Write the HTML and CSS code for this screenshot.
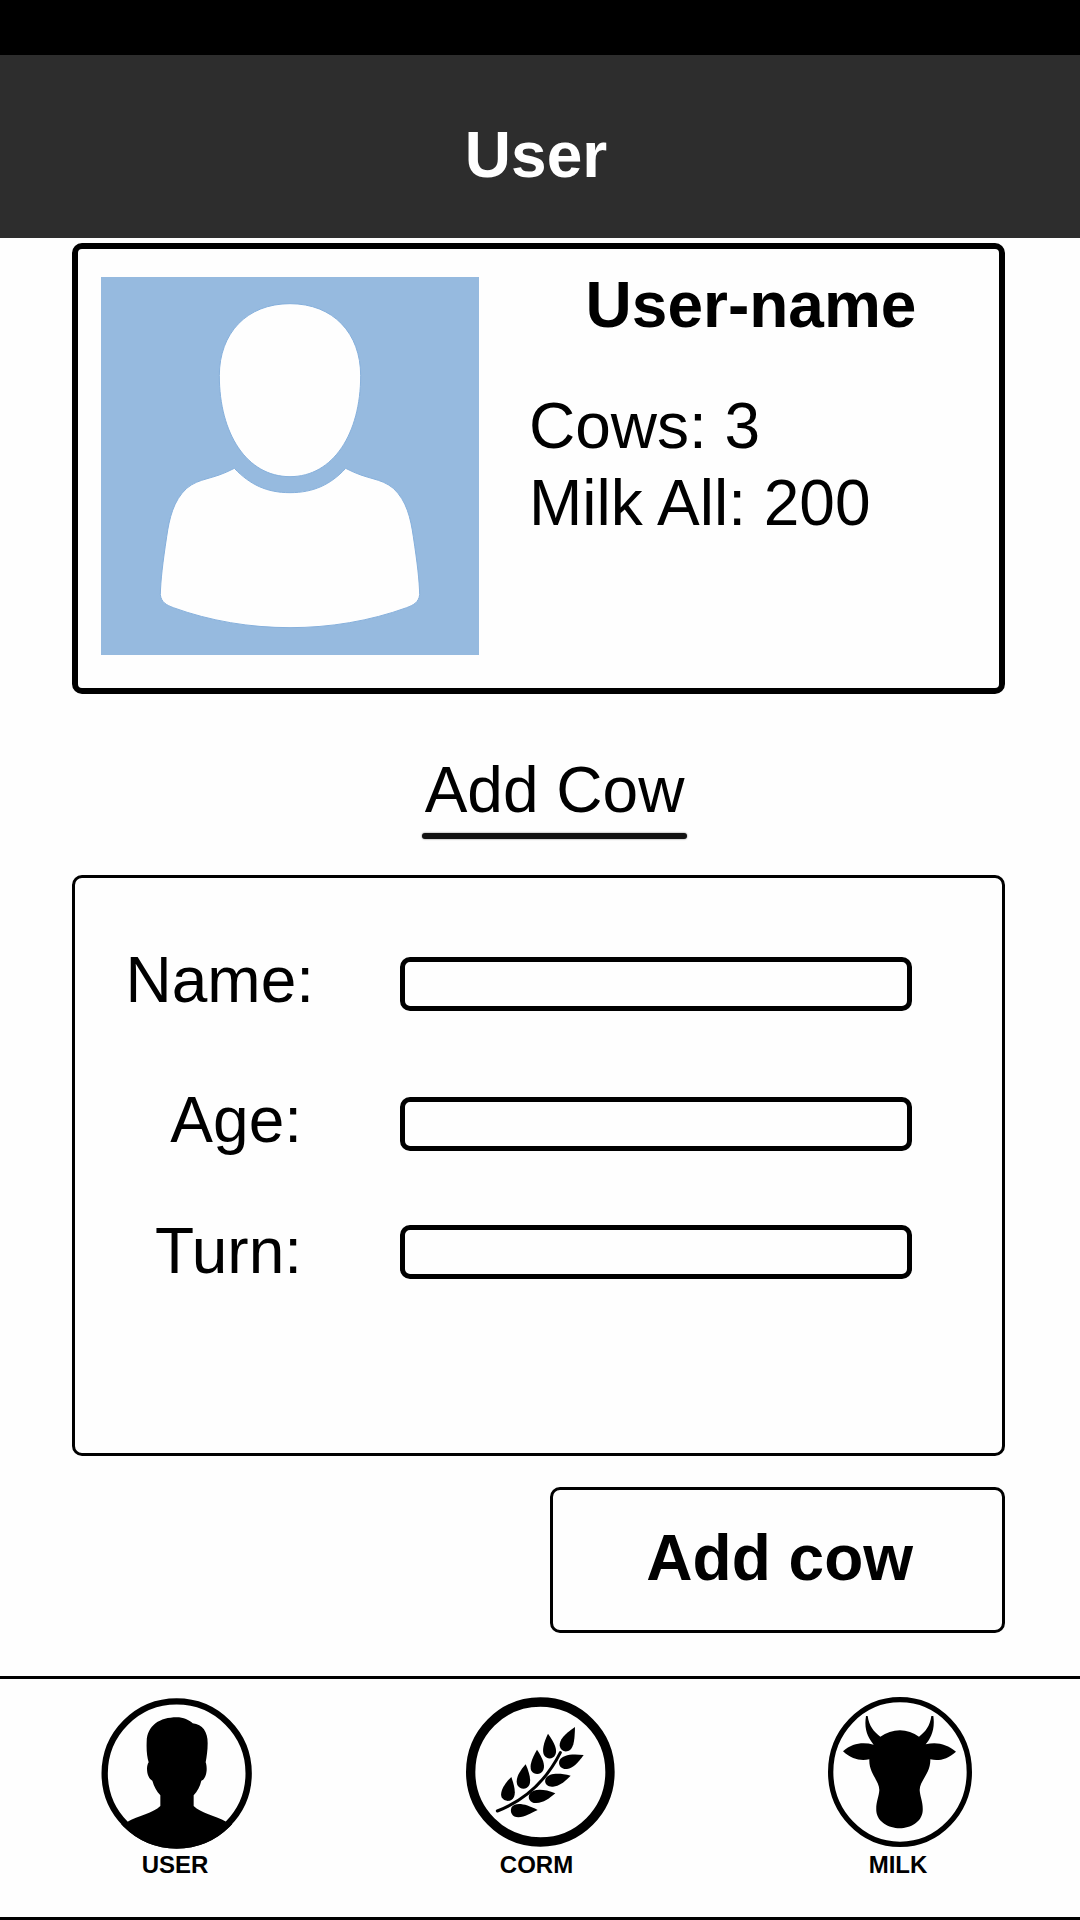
FILE: index.html
```html
<!DOCTYPE html>
<html lang="en">
<head>
  <meta charset="utf-8">
  <meta name="viewport" content="width=device-width, initial-scale=1">
  <title>User</title>
  <link rel="stylesheet" href="styles.css">
</head>
<body>
  <header class="header">
    <h1 class="header-title">User</h1>
  </header>

  <main class="main">
    <section class="profile">
      <svg class="avatar" viewBox="123 171 1134 1134" aria-hidden="true">
        <rect x="123" y="171" width="1134" height="1134" fill="#96badf"/>
        <g fill="#fefefe" stroke="#86b0dc" stroke-width="3">
          <path d="M690 251C820 251 902 340 902 467C902 640 820 770 690 770C560 770 478 640 478 467C478 340 560 251 690 251Z"/>
          <path d="M523 745C570 794 620 818 690 818C760 818 812 794 857 745C925 781 960 772 1000 805C1040 842 1052 895 1060 950C1072 1030 1078 1080 1079 1124C1076 1148 1060 1155 1040 1163C930 1203 810 1223 690 1223C570 1223 450 1203 340 1163C320 1155 304 1148 301 1124C302 1080 308 1030 320 950C328 895 340 842 380 805C420 772 455 781 523 745Z"/>
        </g>
      </svg>
      <div class="profile-text">
        <h2 class="profile-name">User-name</h2>
        <p class="profile-line">Cows: 3</p>
        <p class="profile-line">Milk All: 200</p>
      </div>
    </section>

    <h2 class="section-title">Add Cow</h2>

    <form class="form" id="add-cow">
      <div class="field">
        <label class="field-label field-label-long" for="name">Name:</label>
        <input class="field-input" id="name" name="name" type="text">
      </div>
      <div class="field">
        <label class="field-label" for="age">Age:</label>
        <input class="field-input" id="age" name="age" type="text">
      </div>
      <div class="field field-last">
        <label class="field-label" for="turn">Turn:</label>
        <input class="field-input" id="turn" name="turn" type="text">
      </div>
    </form>

    <button class="submit" type="submit" form="add-cow">Add cow</button>
  </main>

  <nav class="nav">
    <a class="nav-item" href="#user">
      <svg class="nav-icon" viewBox="63 51 456 456" aria-hidden="true">
        <defs>
          <clipPath id="disc"><circle cx="290" cy="280" r="226"/></clipPath>
        </defs>
        <circle cx="290" cy="280" r="216" fill="none" stroke="#000" stroke-width="19"/>
        <path clip-path="url(#disc)" d="M290 112C310 112 328 120 338 130C368 134 383 155 383 190C383 212 380 230 377 247C383 262 381 296 364 302C360 320 352 334 341 346V378C362 400 405 405 441 427L480 440V520H100V440L140 427C176 405 220 400 241 378V346C230 334 222 320 217 302C200 294 197 260 206 247C201 230 199 212 200 185C201 136 240 112 290 112Z"/>
      </svg>
      <span class="nav-label">USER</span>
    </a>
    <a class="nav-item" href="#corm">
      <svg class="nav-icon" viewBox="70 51 456 456" aria-hidden="true">
        <ellipse cx="302" cy="276" rx="209" ry="210" fill="none" stroke="#000" stroke-width="28"/>
        <path d="M173 393C255 361 318 305 362 218" fill="none" stroke="#000" stroke-width="9" stroke-linecap="round"/>
        <path d="M406 141C373 164 359 180 360 198C363 214 380 219 392 209C403 198 405 178 406 141Z"/>
        <path d="M325 161C311 190 307 212 313 225C321 239 340 239 347 224C354 211 346 190 325 161Z"/>
        <path d="M292 209C275 238 269 258 275 272C284 286 304 285 311 270C317 254 309 234 292 209Z"/>
        <path d="M258 253C235 278 227 300 233 315C240 329 262 330 269 315C275 300 269 278 258 253Z"/>
        <path d="M215 291C190 316 180 338 186 352C194 366 215 367 223 351C229 336 223 314 215 291Z"/>
        <path d="M432 225C395 220 368 225 360 240C353 256 366 269 382 267C401 264 414 250 432 225Z"/>
        <path d="M393 287C356 277 328 280 319 294C311 308 322 322 340 320C362 317 374 306 393 287Z"/>
        <path d="M347 340C312 326 281 326 270 341C262 355 272 370 290 369C313 368 327 357 347 340Z"/>
        <path d="M294 390C258 371 228 366 216 381C209 396 218 412 236 412C257 410 271 401 294 390Z"/>
      </svg>
      <span class="nav-label">CORM</span>
    </a>
    <a class="nav-item" href="#milk">
      <svg class="nav-icon" viewBox="72 51 456 456" aria-hidden="true">
        <ellipse cx="300" cy="276" rx="208" ry="217" fill="none" stroke="#000" stroke-width="16"/>
        <path d="M198 108H203C207 138 222 156 241 170C276 144 324 144 357 170C376 156 390 138 394 108H400C406 150 391 176 377 193C410 184 440 192 468 215C442 238 416 244 391 238C392 280 360 300 359 330C360 350 370 368 368 394C365 426 332 445 299 445C266 445 232 426 229 394C227 368 237 350 238 330C237 300 206 280 208 238C182 244 156 238 129 214C158 188 190 186 221 194C205 174 191 150 198 108Z"/>
      </svg>
      <span class="nav-label">MILK</span>
    </a>
  </nav>
</body>
</html>
```
FILE: styles.css
```css
* {
  box-sizing: border-box;
}

body {
  margin: 0;
  background: #fefefe;
  color: #000;
  font-family: "Liberation Sans", Arial, sans-serif;
  font-size: 64px;
  line-height: 77px;
}

h1,
h2,
p {
  margin: 0;
  font-size: 64px;
}

/* The black strip above the bar is the phone's status area. */
.header {
  padding: 62px 8px 44px 0;
  border-top: 55px solid #000;
  background: #2d2d2d;
  color: #fff;
  text-align: center;
}

.main {
  display: flex;
  flex-direction: column;
  padding: 5px 75px 43px 72px;
}

.profile {
  display: flex;
  gap: 50px;
  padding: 18px 26px 33px 23px;
  border: 6px solid #000;
  border-radius: 10px;
}

.avatar {
  flex: none;
  width: 378px;
  height: 378px;
  margin-top: 10px;
}

.profile-text {
  flex: 1;
}

.profile-name {
  margin-bottom: 44px;
  text-align: center;
}

.section-title {
  align-self: center;
  margin: 58px 0 36px 32px;
  font-weight: normal;
}

/* Soft-edged rule, a little wider than the title. */
.section-title::after {
  content: "";
  display: block;
  height: 6px;
  margin: 4px -3px 0;
  border-radius: 3px;
  background: #111;
  box-shadow: 0 0 2px #666;
}

.form {
  padding: 64px 90px 163px 50px;
  border: 3px solid #000;
  border-radius: 10px;
}

.field {
  display: grid;
  grid-template-columns: 189px 1fr;
  column-gap: 86px;
  margin-bottom: 63px;
}

.field:nth-child(2) {
  margin-bottom: 54px;
}

.field-label {
  padding-right: 12px;
  text-align: right;
}

.field-label-long {
  padding-right: 0;
}

.field-input {
  width: 100%;
  height: 54px;
  margin: 15px 0 0;
  padding: 0 12px;
  border: 5px solid #000;
  border-radius: 10px;
  background: #fefefe;
  font: inherit;
  font-size: 32px;
}

.field-last {
  align-items: center;
  margin-bottom: 0;
}

.field-last .field-input {
  margin-top: 0;
}

.submit {
  align-self: flex-end;
  margin: 31px 0 0;
  padding: 30px 89px 33px 93px;
  border: 3px solid #000;
  border-radius: 10px;
  background: #fefefe;
  color: #000;
  font: inherit;
  font-weight: bold;
}

.nav {
  display: flex;
  justify-content: space-between;
  padding: 18px 104px 38px 101px;
  border-top: 3px solid #000;
  border-bottom: 3px solid #000;
}

.nav-item {
  display: flex;
  flex-direction: column;
  align-items: center;
  gap: 2px;
  color: #000;
  text-decoration: none;
}

.nav-icon {
  width: 152px;
  height: 152px;
}

.nav-label {
  padding-right: 4px;
  font-size: 24px;
  font-weight: bold;
  line-height: 28px;
}
```
